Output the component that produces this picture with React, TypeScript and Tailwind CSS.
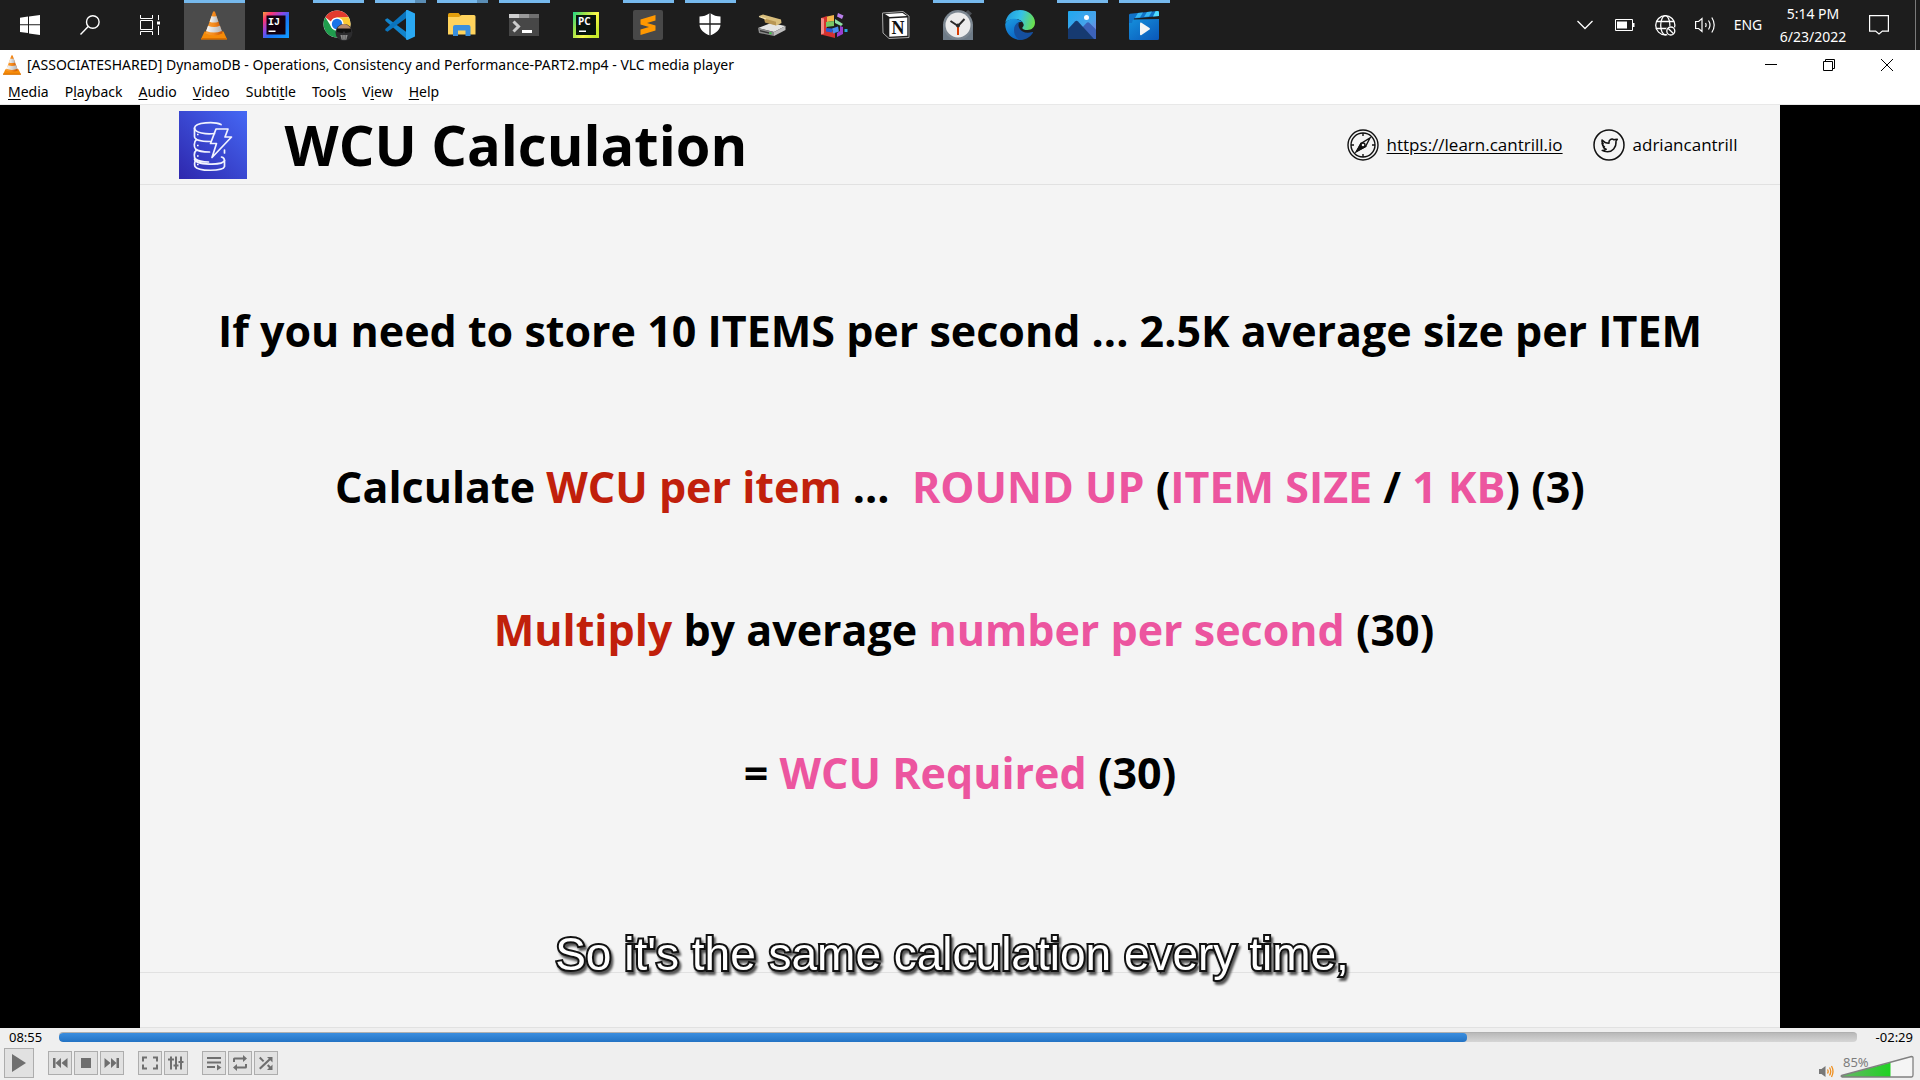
import type { ReactNode } from 'react';

const UI = "font-['Noto_Sans','Open_Sans',sans-serif]";

/* ---------- application icons ---------- */

function ConeIcon({ className }: { className: string }) {
  return (
    <svg viewBox="0 0 26 29" className={className} aria-hidden="true">
      <defs>
        <linearGradient id="coneO" x1="0" x2="1">
          <stop offset="0" stopColor="#f9a13a" />
          <stop offset="0.5" stopColor="#f58a1a" />
          <stop offset="1" stopColor="#c45208" />
        </linearGradient>
        <linearGradient id="coneW" x1="0" x2="1">
          <stop offset="0" stopColor="#fafafa" />
          <stop offset="1" stopColor="#b5b5b5" />
        </linearGradient>
      </defs>
      <path d="M3.5 20.5h19L26 28.2H0z" fill="#f68b08" />
      <path d="M0 27h26v1.6H0z" fill="#d86f00" />
      <path d="M12 .8q1-.9 2 0l7.5 21.4q-8.500 4.400-17 0z" fill="url(#coneO)" />
      <path d="M10.600 5q2.400 1 4.800 0l2 5.700q-4.400 1.800-8.800 0z" fill="url(#coneW)" />
      <path d="M7 14.800q6 2.400 12 0l1.900 5.200q-8 3.200-15.800 0z" fill="url(#coneW)" />
    </svg>
  );
}

const box = 'size-[30px]';

function IntelliJ() {
  return (
    <svg viewBox="0 0 30 30" className={box} aria-hidden="true">
      <defs>
        <linearGradient id="ij" x1="0" y1="0" x2="1" y2="1">
          <stop offset="0" stopColor="#f7a13c" />
          <stop offset=".18" stopColor="#fe3472" />
          <stop offset=".4" stopColor="#8a46e8" />
          <stop offset=".6" stopColor="#1775f6" />
          <stop offset="1" stopColor="#0f9bff" />
        </linearGradient>
      </defs>
      <path d="M2 2h26v26H2z" fill="url(#ij)" />
      <path d="M5.500 5.500h19v19h-19z" fill="#12000f" />
      <text x="7" y="14.500" fontSize="10" fontWeight="700" fill="#fff" fontFamily="Liberation Mono, monospace">IJ</text>
      <path d="M7.500 20.500h7v1.500h-7z" fill="#fff" />
    </svg>
  );
}

function Chrome() {
  return (
    <svg viewBox="0 0 30 32" className="h-8 w-[30px]" aria-hidden="true">
      <circle cx="14" cy="15" r="13.500" fill="#fff" />
      <path d="M2.310 8.250A13.500 13.500 0 0 1 25.690 8.250L14 8.800a6.200 6.200 0 0 0-5.700 4z" fill="#e33b2e" />
      <path d="M14 8.250h11.700A13.500 13.500 0 0 1 14.600 28.480L19.800 18z" fill="#fcc934" />
      <path d="M2.310 8.250L8.400 18a6.200 6.200 0 0 0 8 2.800L14 28.500A13.500 13.500 0 0 1 2.310 8.250z" fill="#1f9d4d" />
      <circle cx="14" cy="15" r="6.600" fill="#fff" />
      <circle cx="14" cy="15" r="5.200" fill="#1a73e8" />
      <ellipse cx="21" cy="23.500" rx="8.500" ry="8.500" fill="#2c2c2e" />
      <path d="M14.500 19q6.500-8 13 0v3h-13z" fill="#b88a6c" />
      <path d="M14 19.500h14v3.500l-5.500 1-1.500-2-1.500 2-5.500-1z" fill="#111" />
      <path d="M17.500 26h7l-1 4.500h-5z" fill="#a7a7a7" />
      <path d="M19.200 26v4M21 26v4M22.800 26v4" stroke="#333" strokeWidth=".7" />
    </svg>
  );
}

function VSCode() {
  return (
    <svg viewBox="0 0 30 30" className={box} aria-hidden="true">
      <path d="M.3 9.300L2.500 8.200 22 22.500V29.500L.3 10.800z" fill="#1284cc" />
      <path d="M22 0v7.500L2.500 21.800.3 20.600v-1.500z" fill="#0a74bd" />
      <path d="M21 .2l1.500-.3L30 3.500v23L22.500 30 21 29.500z" fill="#2aa9f3" />
    </svg>
  );
}

function Explorer() {
  return (
    <svg viewBox="0 0 30 30" className={box} aria-hidden="true">
      <path d="M1 4.500Q1 3 2.500 3h9L14 6v3H1z" fill="#e29f0c" />
      <path d="M1 7h11l2.500-2H27q1.500 0 1.500 1.500v18H1z" fill="#ffd35c" />
      <path d="M6 26V17q0-2 2-2h13.500q2 0 2 2v9h-5v-5.500h-7.500V26z" fill="#3a8fdc" />
    </svg>
  );
}

function Terminal() {
  return (
    <svg viewBox="0 0 30 30" className={box} aria-hidden="true">
      <path d="M0 4h30v22H0z" fill="#474747" />
      <path d="M0 4h10v4H0z" fill="#cfcfcf" />
      <path d="M10 4h10v4H10z" fill="#999" />
      <path d="M20 4h10v4H20z" fill="#707070" />
      <path d="M4.500 11.500l5 5-5 5" fill="none" stroke="#ccc" strokeWidth="3" />
      <path d="M13 20h10v3H13z" fill="#fff" />
    </svg>
  );
}

function PyCharm() {
  return (
    <svg viewBox="0 0 30 30" className={box} aria-hidden="true">
      <defs>
        <linearGradient id="pc" x1="0" y1="0" x2="1" y2=".6">
          <stop offset="0" stopColor="#21d789" />
          <stop offset=".35" stopColor="#9be24a" />
          <stop offset=".7" stopColor="#fcf84a" />
          <stop offset="1" stopColor="#c5ea2c" />
        </linearGradient>
      </defs>
      <path d="M2 2h26v26H2z" fill="url(#pc)" />
      <path d="M5 5h20v20H5z" fill="#07140c" />
      <text x="7" y="14.500" fontSize="10" fontWeight="700" fill="#fff" fontFamily="Open Sans, sans-serif">PC</text>
      <path d="M8 20.500h7V22H8z" fill="#fff" />
    </svg>
  );
}

function Sublime() {
  return (
    <svg viewBox="0 0 30 30" className={box} aria-hidden="true">
      <rect width="30" height="30" rx="2" fill="#484848" />
      <path d="M7.500 9.500L22.500 5v5.500L14 13l8.500 2.500v5L7.500 25v-5.500L16 17l-8.500-2.500z" fill="#ff9800" />
    </svg>
  );
}

function Shield() {
  return (
    <svg viewBox="0 0 30 30" className={box} aria-hidden="true">
      <path d="M15 3q5 3.500 10.500 3.500V14c0 6-5 9.500-10.500 11.500C9.500 23.500 4.500 20 4.500 14V6.500Q10 6.500 15 3z" fill="#fff" />
      <path d="M15 3v23M4 14h22" stroke="#1d1d1d" strokeWidth="1.300" />
    </svg>
  );
}

function Disk() {
  return (
    <svg viewBox="0 0 30 30" className={box} aria-hidden="true">
      <path d="M1 18l13-5 14.500 3-11.500 6z" fill="#e4e4e4" />
      <path d="M1 18l16 4v4L2 23z" fill="#8b8b8b" />
      <path d="M17 22l11.500-6v4L17 26z" fill="#bdbdbd" />
      <path d="M3 20l9 2.200v1.500L3 21.500z" fill="#333" />
      <path d="M12.500 23l2 .5" stroke="#2bd23b" strokeWidth="1.400" />
      <path d="M2 6l4-1.500L24 9.500l.5 3.500-5 2.500L8 12V9z" fill="#d8bd7c" />
      <path d="M7 8.500l12 3.300v3.700L8 12.500z" fill="#b89655" />
      <path d="M2 6.500l7 2.500" stroke="#f5e4b0" strokeWidth="1.200" />
    </svg>
  );
}

function Blocks() {
  return (
    <svg viewBox="0 0 30 30" className={box} aria-hidden="true">
      <path d="M2 8l6-2v14l8 2v6L2 24.500z" fill="#d5322f" />
      <path d="M2 8l3 .6v15L2 24.500z" fill="#f28d88" />
      <path d="M8 6.500l7-1.500v6l-7 1z" fill="#f4b54a" />
      <path d="M7 12l8-1v5l-8 1z" fill="#79c765" />
      <path d="M16 9l8 5-2 2-6-3z" fill="#8de0a4" />
      <path d="M7 18l6 .5v4l-6-1z" fill="#2759d6" />
      <path d="M13 18.500l6-2 1 5-6 2z" fill="#4a8df0" />
      <path d="M21 16l3 1v7l-6 3v-4l3-2z" fill="#9a3fd0" />
      <path d="M19 3l5.500 2.500-1.500 3.500-5-2.500z" fill="#b980ea" />
      <path d="M25.500 19h3v3h-3z" fill="#2aa7de" />
    </svg>
  );
}

function Notion() {
  return (
    <svg viewBox="0 0 30 30" className={box} aria-hidden="true">
      <path d="M1.500 3L22 1.500 28 6v21.500L8 28.500 2 23z" fill="#1d1d1d" stroke="#a8a8a8" />
      <path d="M4 4l17.500-1L26 6 8.500 7z" fill="#fff" />
      <path d="M8.300 8.500l18-1v18.200l-18 1.100z" fill="#fff" />
      <text x="10.500" y="23.500" fontSize="18" fontWeight="700" fill="#111" fontFamily="Liberation Serif, serif">N</text>
    </svg>
  );
}

function Clock() {
  return (
    <svg viewBox="0 0 30 30" className={box} aria-hidden="true">
      <path d="M0 14h30v16H0z" fill="#6e7b87" />
      <path d="M25 0l4 3.500-3 3-4-4z" fill="#4b4f54" />
      <circle cx="15" cy="15" r="15" fill="#7c8791" />
      <circle cx="15" cy="15" r="12.500" fill="#ececec" />
      <path d="M7.500 11l7.500 5 6.500-7" fill="none" stroke="#2b2b2b" strokeWidth="2" />
      <path d="M15 16v9" stroke="#d83b01" strokeWidth="2" />
      <circle cx="15" cy="15.500" r="2" fill="#2b2b2b" />
    </svg>
  );
}

function Edge() {
  return (
    <svg viewBox="0 0 30 30" className={box} aria-hidden="true">
      <defs>
        <linearGradient id="edA" x1="0" y1=".3" x2="1" y2=".5">
          <stop offset="0" stopColor="#1f9ade" />
          <stop offset=".5" stopColor="#35c1e8" />
          <stop offset="1" stopColor="#6be04c" />
        </linearGradient>
        <linearGradient id="edB" x1="0" y1="0" x2=".5" y2="1">
          <stop offset="0" stopColor="#1b9de2" />
          <stop offset="1" stopColor="#0b63c4" />
        </linearGradient>
      </defs>
      <path d="M.3 13C1.500 5 7.500 0 15 0c8.500 0 15 6 15 12.500 0 4.800-3.500 7.500-7.500 7.500-3 0-5.500-1-5.200-2.300C18.500 16.500 19 15.500 18.500 14c-1-3-4-5-8-5C5.500 9 1.500 11 .3 13z" fill="url(#edA)" />
      <path d="M.2 14C2 10 6 8.500 10 8.800c3 .2 6 1.500 7.500 3.500-4-1.500-7 2-6.500 6 .6 5 4.500 9.500 9 10.500C10.500 32.500 0 25.500.2 14z" fill="url(#edB)" />
      <path d="M9 20c0-4 2-7 5.500-8-1.500 2-1.200 4.500 0 6.500 2 3.500 7 5.500 12.800 3.500.8-.3 1 .2.500 1C23.500 29.500 16 31.500 12 28c-2-2-3-5-3-8z" fill="#154f9f" />
    </svg>
  );
}

function Photos() {
  return (
    <svg viewBox="0 0 30 30" className={box} aria-hidden="true">
      <defs>
        <linearGradient id="ph" x1="0" y1="0" x2="1" y2="1">
          <stop offset="0" stopColor="#1fa8ee" />
          <stop offset=".6" stopColor="#4aa3ea" />
          <stop offset="1" stopColor="#8d6fd6" />
        </linearGradient>
      </defs>
      <rect x="1" y="1" width="28" height="28" rx="1" fill="url(#ph)" />
      <path d="M13 20l6.500-7q1.500-1.500 3 0L29 19.500V29H13z" fill="#3c62b8" />
      <path d="M1 19l7-7.500q1.500-1.500 3 0L27 29H1z" fill="#163a70" />
      <circle cx="19.500" cy="7.500" r="2.500" fill="#fff" />
    </svg>
  );
}

function Movies() {
  return (
    <svg viewBox="0 0 30 30" className={box} aria-hidden="true">
      <defs>
        <linearGradient id="mv" x1="0" y1="0" x2="1" y2="1">
          <stop offset="0" stopColor="#1590dc" />
          <stop offset="1" stopColor="#0a56b8" />
        </linearGradient>
      </defs>
      <path d="M0 5q0-1 1-1.200L28.500 1q1.500 0 1.500 1.500V6L5 8.500 4 13H0z" fill="#1173c7" />
      <path d="M9 3l5-.5-3 5-5 .6zM18 2l5-.5-3 5-5 .6z" fill="#35b6f2" />
      <path d="M26.500 1.200L29 1q1 .3 1 1.500V6l-6 .5z" fill="#50dcff" />
      <path d="M4 9.500L30 9v19.500q0 1.500-1.500 1.500h-27Q0 30 0 28.500V13h3z" fill="url(#mv)" />
      <path d="M11 13.500q0-1.500 1.500-.8l8 5.300q1 .8 0 1.500l-8 5.500q-1.500.7-1.500-.8z" fill="#f5f5f5" />
    </svg>
  );
}

type App = { name: string; icon: ReactNode; state?: 'active' | 'open' | 'multi' };

const apps: App[] = [
  { name: 'VLC media player', icon: <ConeIcon className="h-[29px] w-[26px]" />, state: 'active' },
  { name: 'IntelliJ IDEA', icon: <IntelliJ /> },
  { name: 'Google Chrome', icon: <Chrome />, state: 'open' },
  { name: 'Visual Studio Code', icon: <VSCode />, state: 'multi' },
  { name: 'File Explorer', icon: <Explorer />, state: 'multi' },
  { name: 'Terminal', icon: <Terminal />, state: 'open' },
  { name: 'PyCharm', icon: <PyCharm /> },
  { name: 'Sublime Text', icon: <Sublime />, state: 'open' },
  { name: 'Windows Security', icon: <Shield />, state: 'open' },
  { name: 'Disk tool', icon: <Disk /> },
  { name: 'Defragmenter', icon: <Blocks /> },
  { name: 'Notion', icon: <Notion /> },
  { name: 'Clock', icon: <Clock />, state: 'open' },
  { name: 'Microsoft Edge', icon: <Edge /> },
  { name: 'Photos', icon: <Photos />, state: 'open' },
  { name: 'Movies & TV', icon: <Movies />, state: 'open' },
];

function Taskbar() {
  return (
    <header className="flex h-[50px] shrink-0 justify-between bg-[#1d1d1d] text-white">
      <nav aria-label="Taskbar" className="flex gap-1">
        <div className="flex">
          <button aria-label="Start" className="flex w-15 items-center justify-center">
            <svg viewBox="0 0 20 20" className="size-5" fill="#fff" aria-hidden="true">
              <path d="M0 2.800L8 1.600v7.700H0zM9 1.500L20 0v9.300H9zM0 10.300h8V18l-8-1.100zM9 10.300h11V20L9 18.400z" />
            </svg>
          </button>
          <button aria-label="Search" className="flex w-15 items-center justify-center">
            <svg viewBox="0 0 20 20" className="size-5" fill="none" stroke="#fff" strokeWidth="1.400" aria-hidden="true">
              <circle cx="12.800" cy="7" r="6.300" />
              <path d="M8.200 11.500L.5 19.500" />
            </svg>
          </button>
          <button aria-label="Task view" className="flex w-15 items-center justify-center">
            <svg viewBox="0 0 20 20" className="size-5" fill="none" stroke="#fff" aria-hidden="true">
              <path d="M.5 0v3.500h12V0M.5 20v-3.500h12V20M.5 5.500h12v9H.5zM18.500 0v5M18.500 11v9" />
              <path d="M17 6.500h3v3h-3z" fill="#fff" stroke="none" />
            </svg>
          </button>
        </div>
        <div className="flex gap-px">
          {apps.map((a) => (
            <button
              key={a.name}
              aria-label={a.name}
              className={`relative flex w-[61px] items-center justify-center pr-px ${a.state === 'active' ? 'bg-[#4b4b4b]' : ''}`}
            >
              {a.state === 'active' && <span className="absolute inset-x-0 top-0 h-[3px] bg-[#76b9ed]" />}
              {a.state === 'open' && <span className="absolute inset-x-[5px] top-0 h-[3px] bg-[#76b9ed]" />}
              {a.state === 'multi' && (
                <span className="absolute inset-x-[5px] top-0 flex h-[3px]">
                  <span className="flex-1 bg-[#76b9ed]" />
                  <span className="w-[11px] bg-[#5a8db5]" />
                </span>
              )}
              {a.icon}
            </button>
          ))}
        </div>
      </nav>
      <div className={`flex items-center ${UI}`}>
        <button aria-label="Show hidden icons" className="flex w-10 justify-center">
          <svg viewBox="0 0 16 10" className="h-2.5 w-4" fill="none" stroke="#fff" strokeWidth="1.300" aria-hidden="true">
            <path d="M.5 1L8 8.500 15.500 1" />
          </svg>
        </button>
        <button aria-label="Battery" className="flex w-10 justify-center">
          <svg viewBox="0 0 20 12" className="h-3 w-5" aria-hidden="true">
            <path d="M.5.5h17v11H.5z" fill="none" stroke="#fff" />
            <path d="M2 2.500h10v7H2zM18 4h1.500v4H18z" fill="#fff" />
          </svg>
        </button>
        <button aria-label="Network" className="flex w-10 justify-center">
          <svg viewBox="0 0 21 21" className="size-[21px]" fill="none" stroke="#fff" strokeWidth="1.300" aria-hidden="true">
            <circle cx="10.300" cy="10.300" r="9.600" />
            <ellipse cx="10.300" cy="10.300" rx="4.600" ry="9.600" />
            <path d="M1.500 6.500h17.600M.8 13.500h12" />
            <circle cx="15.800" cy="16" r="5.200" fill="#1d1d1d" stroke="none" />
            <circle cx="15.800" cy="16" r="4" />
            <path d="M13 13.200l5.600 5.600" />
          </svg>
        </button>
        <button aria-label="Volume" className="flex w-10 justify-center">
          <svg viewBox="0 0 21 18" className="h-[18px] w-[21px]" fill="none" stroke="#fff" strokeWidth="1.200" aria-hidden="true">
            <path d="M.6 5.500h3L7 2.500v13l-3.400-3h-3z" />
            <path d="M10.500 7q1.200 2 0 4M13.500 4.500q3 4.500 0 9M16.800 1.500q4.800 7.500 0 15" />
          </svg>
        </button>
        <button className="w-[46px] text-[14px]/[20px]">ENG</button>
        <button className="w-[84px] text-center text-[14px]/[23px]">
          5:14 PM
          <br />
          6/23/2022
        </button>
        <button aria-label="Notifications" className="flex w-[61px] items-center justify-center self-stretch border-r border-[#7a7a7a] pr-3">
          <svg viewBox="0 0 20 20" className="size-5" fill="none" stroke="#fff" strokeWidth="1.200" aria-hidden="true">
            <path d="M.6.600h18.800v15.500h-6L10 19l-3.400-2.900h-6z" />
          </svg>
        </button>
        <span className="w-1" />
      </div>
    </header>
  );
}

const menus: [string, string, string][] = [
  ['', 'M', 'edia'],
  ['P', 'l', 'ayback'],
  ['', 'A', 'udio'],
  ['', 'V', 'ideo'],
  ['Subti', 't', 'le'],
  ['Tool', 's', ''],
  ['V', 'i', 'ew'],
  ['', 'H', 'elp'],
];

function WindowChrome() {
  return (
    <div className={`shrink-0 border-b border-[#e8e8e8] bg-white text-black ${UI}`}>
      <div className="flex h-[30px] items-center justify-between">
        <div className="flex items-center gap-1.5 pl-[3px]">
          <ConeIcon className="h-5 w-[18px]" />
          <h1 className="text-[14px]/[20px] whitespace-nowrap">
            [ASSOCIATESHARED] DynamoDB - Operations, Consistency and Performance-PART2.mp4 - VLC media player
          </h1>
        </div>
        <div className="flex pr-1">
          <button aria-label="Minimize" className="flex w-[58px] items-center justify-center">
            <svg viewBox="0 0 12 12" className="size-3" stroke="#000" aria-hidden="true"><path d="M0 5.500h12" /></svg>
          </button>
          <button aria-label="Restore" className="flex w-[58px] items-center justify-center">
            <svg viewBox="0 0 12 12" className="size-3" fill="none" stroke="#000" aria-hidden="true">
              <path d="M.5 2.500h9v9h-9zM2.500 2.500v-2h9v9h-2" />
            </svg>
          </button>
          <button aria-label="Close" className="flex w-[58px] items-center justify-center">
            <svg viewBox="0 0 12 12" className="size-3" stroke="#000" aria-hidden="true"><path d="M0 0l12 12M12 0L0 12" /></svg>
          </button>
        </div>
      </div>
      <nav aria-label="Menu" className="flex h-6 items-center gap-4 pl-2 text-[14px]/[20px]">
        {menus.map(([a, b, c]) => (
          <button key={a + b + c}>
            {a}
            <span className="underline underline-offset-2">{b}</span>
            {c}
          </button>
        ))}
      </nav>
    </div>
  );
}

/* ---------- slide ---------- */

const Red = ({ children }: { children: ReactNode }) => <span className="text-[#c1200b]">{children}</span>;
const Pink = ({ children }: { children: ReactNode }) => <span className="text-[#ec559f]">{children}</span>;

function Slide() {
  return (
    <main className="flex min-h-0 flex-1 justify-center bg-black">
      <section className="relative flex aspect-video flex-col bg-[#f4f4f4] font-['Open_Sans','Noto_Sans',sans-serif] text-black">
        <header className="flex h-20 shrink-0 items-center border-b border-[#e1e1e1] pr-[43px] pl-[39px]">
          <svg viewBox="0 0 68 68" className="size-[68px]" aria-hidden="true">
            <defs>
              <linearGradient id="ddb" x1="0" y1="1" x2="1" y2="0">
                <stop offset="0" stopColor="#2e27ad" />
                <stop offset="1" stopColor="#4568f5" />
              </linearGradient>
            </defs>
            <path d="M0 0h68v68H0z" fill="url(#ddb)" />
            <g fill="none" stroke="#f1f3ff" strokeWidth="1.700" strokeLinejoin="round" strokeLinecap="round">
              <path d="M42 13.500C36 10.500 16 11 15.500 17c0 5 12 6.500 20 5.500" />
              <path d="M15.500 17v8.500c0 3.500 7 5 16 5" />
              <path d="M17.500 28.500c-3 2.500-2.500 8-1 9.500 2.500 2 7 3 14 3" />
              <path d="M17.500 39c-3 2.500-2.500 7.500-1 9 2.500 2 7 3 13 3" />
              <path d="M17.500 49c-2.500 1-2 5-1.500 6.500 3 5 28 5 29.500 0v-6c0-2-1-3-3-3.500" />
              <path d="M15.500 48c1 6 28 7 30 1.500M45.500 39v3" />
              <path d="M37 18h12l-3 8h6.500L33 46.500 37.500 32.500h-6z" />
            </g>
            <path d="M18 23.500h1.600M18 34.500h1.600M18 45h1.600M18 53.500h1.600" stroke="#fff" strokeWidth="1.600" />
          </svg>
          <h2 className="ml-[38px] pb-0.5 text-[56px]/[76px] font-bold whitespace-nowrap">WCU Calculation</h2>
          <div className="ml-auto flex items-center text-[17px]/[24px] whitespace-nowrap">
            <svg viewBox="0 0 32 32" className="size-8" fill="none" stroke="#111" strokeWidth="1.400" aria-hidden="true">
              <circle cx="16" cy="16" r="15" />
              <circle cx="16" cy="16" r="12" />
              <path d="M16 4v3M16 25v3M4 16h3M25 16h3" />
              <path d="M23 9L18.500 17.500 9.500 22.500 14 14.500z" />
              <path d="M9.500 22.500l4.500-8 4.500 3z" fill="#111" />
              <circle cx="16" cy="16" r="2" fill="#f4f4f4" />
            </svg>
            <a href="https://learn.cantrill.io" className="ml-2 underline underline-offset-2">https://learn.cantrill.io</a>
            <svg viewBox="0 0 32 32" className="ml-[30px] size-8" fill="none" stroke="#111" strokeWidth="1.500" strokeLinejoin="round" aria-hidden="true">
              <circle cx="16" cy="16" r="15" />
              <path d="M9 11c2 2.300 4.300 3.300 7 3.300-.6-3.300 2.500-5.300 5-3.500l1-.2 2.300-.3-1.300 1.800c.6 6.500-4 10.700-8.500 10.700-2.500 0-4-.4-5.300-1.300 1.800 0 3-.4 4-1.200-1.700-.4-2.600-1.300-3-2.500h1.300c-1.700-1-2.500-2-2.500-3.500l1.200.4C9 13.600 8.500 12.500 9 11z" />
            </svg>
            <span className="ml-2">adriancantrill</span>
          </div>
        </header>
        <div className="flex flex-1 flex-col items-center pt-[116px] text-[43px]/[60px] font-bold whitespace-pre">
          <p>If you need to store 10 ITEMS per second ... 2.5K average size per ITEM</p>
          <p className="mt-[96px]">
            Calculate <Red>WCU per item</Red> ...{'  '}<Pink>ROUND UP</Pink> (<Pink>ITEM SIZE</Pink> / <Pink>1 KB</Pink>) (3)
          </p>
          <p className="mt-[83px] pl-2">
            <Red>Multiply</Red> by average <Pink>number per second</Pink> (30)
          </p>
          <p className="mt-[83px]">
            = <Pink>WCU Required</Pink> (30)
          </p>
        </div>
        <footer className="h-14 shrink-0 border-y border-[#e1e1e1]" />
        <p className="absolute inset-x-0 bottom-[46px] pr-4 text-center font-['Liberation_Sans',sans-serif] text-[46px]/[56px] text-white drop-shadow-[2px_3px_1px_#555] [-webkit-text-stroke:4px_#111] [paint-order:stroke_fill]">
          So it's the same calculation every time,
        </p>
      </section>
    </main>
  );
}

/* ---------- player controls ---------- */

const controls: { name: string; icon: ReactNode }[][] = [
  [
    { name: 'Previous', icon: <path d="M1 3h2.500v10H1zM9 3v10L3.500 8zM15.500 3v10L9.500 8z" /> },
    { name: 'Stop', icon: <path d="M3 3h10v10H3z" /> },
    { name: 'Next', icon: <path d="M.5 3v10l6-5zM7 3v10l5.500-5zM12.500 3H15v10h-2.500z" /> },
  ],
  [
    { name: 'Fullscreen', icon: <path d="M0 1.500h5v2H2v3H0zM11 1.500h5v5h-2v-3h-3zM0 9.500h2v3h3v2H0zM14 9.500h2v5h-5v-2h3z" /> },
    { name: 'Extended settings', icon: <path d="M2 1.500h2v13H2zM0 3.500h6v2H0zM7 1.500h2v13H7zM5.500 9.500h5v2h-5zM12 1.500h2v13h-2zM10.500 6h5v2h-5z" /> },
  ],
  [
    { name: 'Playlist', icon: <path d="M1 2h14v2H1zM1 6.500h14v2H1zM1 11h8v2H1zM11 9.500v6l4.500-3z" /> },
    { name: 'Loop', icon: <path d="M1 7V4q0-1.500 1.500-1.500H11V0l4 3.500L11 7V4.500H3V7zM15 9v3q0 1.500-1.500 1.500H5V16l-4-3.500L5 9v2.500h8V9z" /> },
    { name: 'Shuffle', icon: <path d="M1 3.300L2.500 1.800l3.800 3.900-1.400 1.400zM9 10.700l1.400-1.400 2.300 2.300L14.500 9.500V15H9l2-2zM1 13L10.800 3.700 9 2h5.500v5.500L12.300 5.200 2.500 14.500z" /> },
  ],
];

function Player() {
  return (
    <footer className="shrink-0 bg-[#efefef] font-['Noto_Sans',sans-serif] text-black">
      <div className="flex h-[18px] items-center pr-[7px] pl-[9px] text-[13px]/[18px]">
        <span className="w-[50px]">08:55</span>
        <label className="relative flex h-2.5 flex-1 overflow-hidden rounded-sm border-t border-[#b0b0b0] bg-linear-to-b from-[#b9b9b9] to-[#d6d6d6]">
          <span className="w-[78.3%] rounded-sm bg-linear-to-b from-[#3a8edf] to-[#2373c4]" />
          <input type="range" aria-label="Position" min={0} max={1000} defaultValue={783} className="absolute inset-0 w-full opacity-0" />
        </label>
        <span className="w-14 text-right">-02:29</span>
      </div>
      <div className="flex h-[34px] items-center justify-between pr-1.5 pl-1">
        <div className="flex items-center gap-3.5">
          <button aria-label="Play" className="flex size-[30px] items-center justify-center border border-[#adadad] bg-[#e1e1e1]">
            <svg viewBox="0 0 16 18" className="h-[18px] w-4" fill="#6f6f6f" aria-hidden="true"><path d="M1 0l14 9-14 9z" /></svg>
          </button>
          {controls.map((group) => (
            <div key={group[0].name} className="flex gap-0.5">
              {group.map((c) => (
                <button key={c.name} aria-label={c.name} className="flex size-6 items-center justify-center border border-[#adadad] bg-[#e1e1e1]">
                  <svg viewBox="0 0 16 16" className="size-4" fill="#6f6f6f" aria-hidden="true">{c.icon}</svg>
                </button>
              ))}
            </div>
          ))}
        </div>
        <div className="flex items-end gap-1.5 self-end pb-0.5">
          <button aria-label="Mute">
            <svg viewBox="0 0 15 13" className="h-[13px] w-[15px]" fill="none" aria-hidden="true">
              <path d="M0 4h2.500L6.500 1v11L2.500 9H0z" fill="#777" />
              <path d="M8.500 4.500q1.300 2 0 4M10.500 2.500q2.500 4 0 8M12.500 1q3 5.500 0 11" stroke="#ef8e1c" strokeWidth="1.300" />
            </svg>
          </button>
          <label className="relative block h-[23px] w-[74px]">
            <svg viewBox="0 0 74 23" className="h-[23px] w-[74px]" aria-hidden="true">
              <defs>
                <linearGradient id="vol" x1="0" x2="1">
                  <stop offset="0" stopColor="#69b569" />
                  <stop offset="1" stopColor="#1fd222" />
                </linearGradient>
              </defs>
              <path d="M1 20.500L73 1.500V22H1z" fill="#f5f5f5" />
              <path d="M1 20.500L50.500 7.500V22H1z" fill="url(#vol)" />
              <path d="M1.500 20.500L71.500 1.500q1.500 0 1.500 1V20q0 2-1.500 2H2q-1.500-.5-.5-1.500z" fill="none" stroke="#808080" strokeWidth="1.300" />
            </svg>
            <span className="absolute top-0 left-[3px] text-[13px]/[14px] text-[#7d7d7d]">85%</span>
            <input type="range" aria-label="Volume level" min={0} max={125} defaultValue={85} className="absolute inset-0 w-full opacity-0" />
          </label>
        </div>
      </div>
    </footer>
  );
}

export default function App() {
  return (
    <div className="flex h-screen flex-col overflow-hidden">
      <Taskbar />
      <WindowChrome />
      <Slide />
      <Player />
    </div>
  );
}
